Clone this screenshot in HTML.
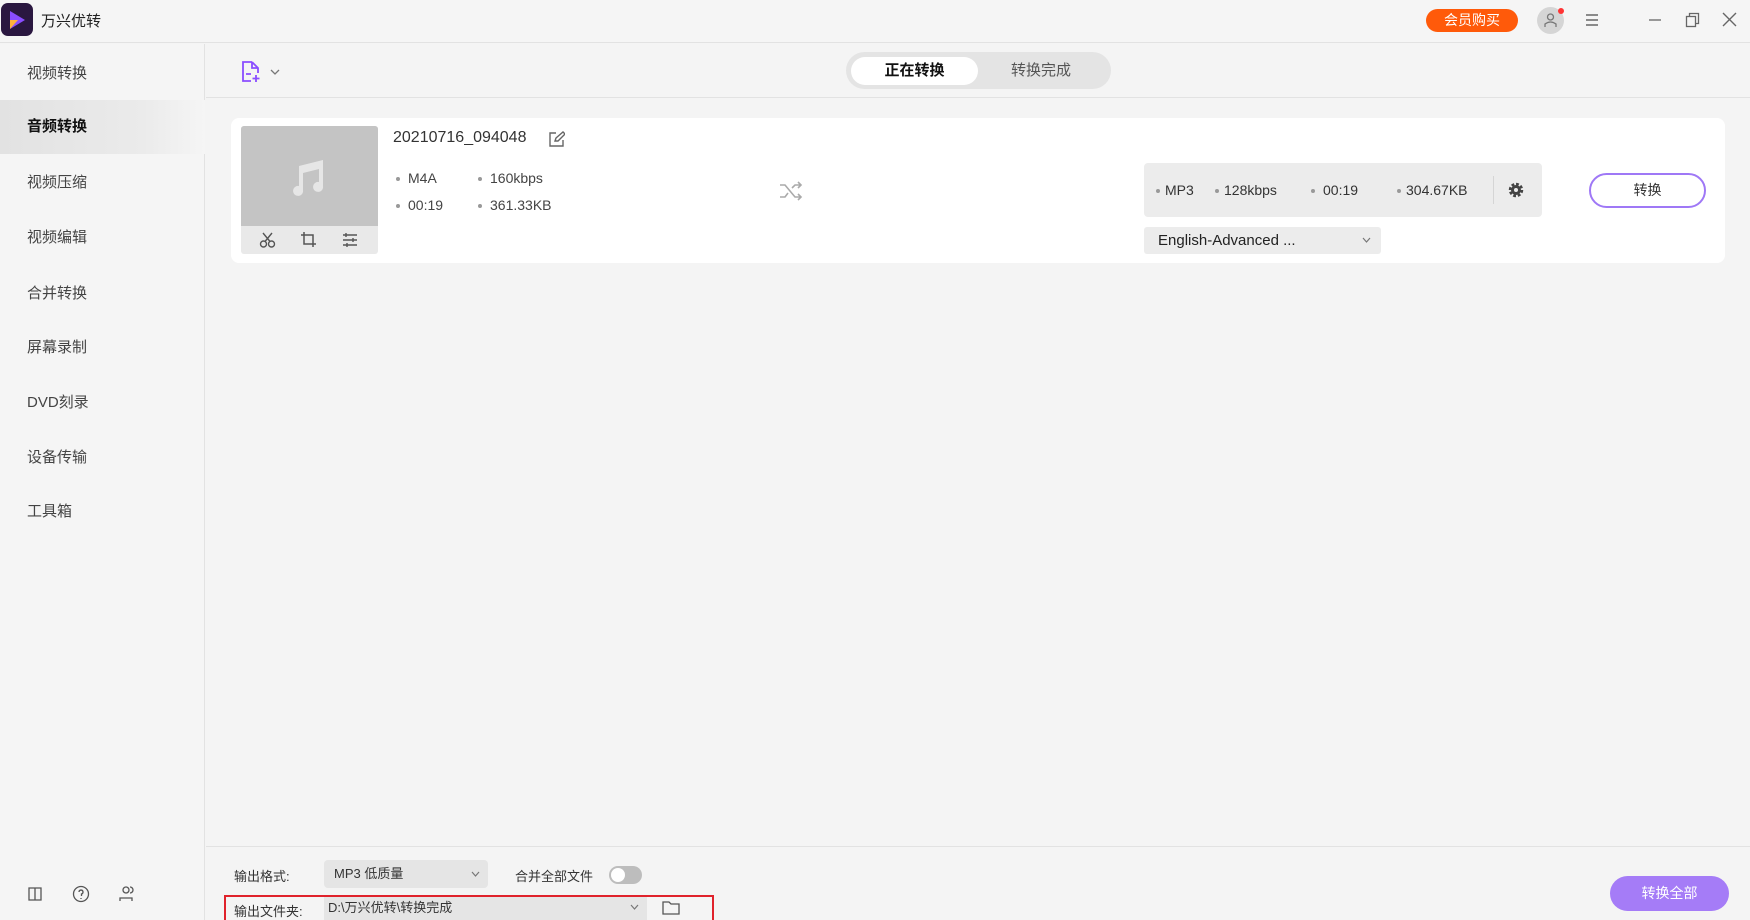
<!DOCTYPE html>
<html style="width:1750px;height:920px;overflow:hidden"><head><meta charset="utf-8"><style>
*{margin:0;padding:0;box-sizing:border-box}
body{width:1750px;height:920px;overflow:hidden;background:#f4f4f4;font-family:"Liberation Sans","Noto Sans CJK SC",sans-serif;color:#333;position:relative}
.a{position:absolute}
.nav{position:absolute;left:0;width:205px;height:54px;line-height:54px;padding-left:27px;font-size:15px;color:#444}
.dot{display:inline-block;width:4px;height:4px;border-radius:2px;background:#999;vertical-align:middle;margin-right:8px}
</style></head><body>
<div class="a" style="left:0;top:0;width:1750px;height:43px;background:#f5f5f5;border-bottom:1px solid #e2e2e2"></div>
<div class="a" style="left:1px;top:3px;width:32px;height:33px;border-radius:7px;background:#2a1740"></div>
<svg class="a" style="left:6px;top:9px" width="22" height="22" viewBox="0 0 22 22"><path d="M4 2 L19 11 L4 20 Z" fill="#8a4dff"/><path d="M4 11 L12 11 L4 20Z" fill="#ffb13b"/></svg>
<div class="a" style="left:41px;top:10px;font-size:15px;color:#222">万兴优转</div>
<div class="a" style="left:1426px;top:9px;width:92px;height:23px;border-radius:12px;background:#ff5a0a;color:#fff;font-size:14px;text-align:center;line-height:23px">会员购买</div>
<div class="a" style="left:1537px;top:7px;width:27px;height:27px;border-radius:14px;background:#d5d5d5"></div>
<svg class="a" style="left:1543px;top:12px" width="15" height="16" viewBox="0 0 15 16" fill="none" stroke="#777" stroke-width="1.3"><circle cx="7.5" cy="5" r="3"/><path d="M2 15 V12 Q7.5 8 13 12 V15"/></svg>
<div class="a" style="left:1558px;top:8px;width:6px;height:6px;border-radius:3px;background:#f33"></div>
<svg class="a" style="left:1585px;top:13px" width="14" height="14" stroke="#666" stroke-width="1.4"><path d="M1 2h12M1 7h12M1 12h12"/></svg>
<svg class="a" style="left:1648px;top:13px" width="14" height="14" stroke="#666" stroke-width="1.3"><path d="M1 7h12"/></svg>
<svg class="a" style="left:1685px;top:12px" width="15" height="16" stroke="#666" stroke-width="1.3" fill="none"><rect x="1.5" y="4.5" width="9" height="10"/><path d="M4.5 4.5V1.5h9v10h-3"/></svg>
<svg class="a" style="left:1722px;top:12px" width="15" height="15" stroke="#666" stroke-width="1.4"><path d="M1 1l13 13M14 1L1 14"/></svg>
<div class="a" style="left:0;top:44px;width:205px;height:876px;background:#f5f5f5;border-right:1px solid #e2e2e2"></div>
<div class="a" style="left:0;top:100px;width:205px;height:54px;background:linear-gradient(90deg,#e2e2e2,#ebebeb 70%,#f5f5f5)"></div>
<div class="nav" style="top:47px">视频转换</div>
<div class="nav" style="top:100px;font-weight:bold;color:#111">音频转换</div>
<div class="nav" style="top:156px">视频压缩</div>
<div class="nav" style="top:211px">视频编辑</div>
<div class="nav" style="top:267px">合并转换</div>
<div class="nav" style="top:321px">屏幕录制</div>
<div class="nav" style="top:376px">DVD刻录</div>
<div class="nav" style="top:431px">设备传输</div>
<div class="nav" style="top:485px">工具箱</div>
<svg class="a" style="left:27px;top:886px" width="18" height="16" fill="none" stroke="#555" stroke-width="1.3"><path d="M2 2h6v12H2zM8 2h6v12H8"/></svg>
<svg class="a" style="left:72px;top:885px" width="18" height="18" fill="none" stroke="#555" stroke-width="1.3"><circle cx="9" cy="9" r="7.5"/><path d="M7 7a2 2 0 1 1 2.5 2v2M9 13v1"/></svg>
<svg class="a" style="left:118px;top:885px" width="18" height="18" fill="none" stroke="#555" stroke-width="1.3"><circle cx="8" cy="5" r="3"/><path d="M2 16v-3h12v3M12 2a3 3 0 0 1 0 6"/></svg>
<div class="a" style="left:206px;top:97px;width:1544px;height:1px;background:#e2e2e2"></div>
<svg class="a" style="left:240px;top:60px" width="22" height="24" fill="none" stroke="#8a4dff" stroke-width="1.8"><path d="M12 2H3v19h8M12 2l6 6v5M12 2v6h6M6 14h5M16 15v7M12.5 18.5h7"/></svg>
<svg class="a" style="left:270px;top:68px" width="10" height="8" fill="none" stroke="#777" stroke-width="1.3"><path d="M1 2l4 4 4-4"/></svg>
<div class="a" style="left:846px;top:52px;width:265px;height:37px;border-radius:19px;background:#e4e4e4"></div>
<div class="a" style="left:851px;top:57px;width:127px;height:28px;border-radius:14px;background:#fff;font-size:15px;font-weight:bold;color:#111;text-align:center;line-height:28px">正在转换</div>
<div class="a" style="left:985px;top:57px;width:112px;height:28px;font-size:15px;color:#555;text-align:center;line-height:28px">转换完成</div>
<div class="a" style="left:231px;top:118px;width:1494px;height:145px;border-radius:8px;background:#fff"></div>
<div class="a" style="left:241px;top:126px;width:137px;height:128px;border-radius:3px;background:#e9e9e9;overflow:hidden"><div style="height:100px;background:#c4c4c4"></div></div>
<svg class="a" style="left:289px;top:158px" width="38" height="40" fill="#e6e6e6"><path d="M10 8L34 2V28A5 5 0 1 1 30 24V11L14 15V32A5 5 0 1 1 10 28Z"/></svg>
<svg class="a" style="left:259px;top:231px" width="18" height="18" fill="none" stroke="#555" stroke-width="1.4"><circle cx="4.5" cy="13" r="3"/><circle cx="12.5" cy="13" r="3"/><path d="M6 10.5L13 2M11 10.5L4 2"/></svg>
<svg class="a" style="left:300px;top:231px" width="18" height="18" fill="none" stroke="#555" stroke-width="1.5"><path d="M4 1v12h12M1 4h12v12"/></svg>
<svg class="a" style="left:342px;top:232px" width="16" height="16" fill="none" stroke="#555" stroke-width="1.4"><path d="M1 3h14M1 8h14M1 13h14M4 1v4M11 6v4M5 11v4"/></svg>
<div class="a" style="left:393px;top:129px;font-size:16px;color:#333">20210716_094048</div>
<svg class="a" style="left:548px;top:131px" width="17" height="17" fill="none" stroke="#666" stroke-width="1.4"><path d="M8 2H2v13h13V9M7 10l1-3 7-6 2 2-7 7z"/></svg>
<div class="a" style="left:396px;top:170px;font-size:14px;color:#444"><span class="dot"></span>M4A</div>
<div class="a" style="left:478px;top:170px;font-size:14px;color:#444"><span class="dot"></span>160kbps</div>
<div class="a" style="left:396px;top:197px;font-size:14px;color:#444"><span class="dot"></span>00:19</div>
<div class="a" style="left:478px;top:197px;font-size:14px;color:#444"><span class="dot"></span>361.33KB</div>
<svg class="a" style="left:779px;top:180px" width="24" height="22" fill="none" stroke="#aaa" stroke-width="1.6"><path d="M1 5h5l10 12h6M1 17h5l3-4M13 8l3-3h6M19 2l3 3-3 3M19 14l3 3-3 3"/></svg>
<div class="a" style="left:1144px;top:163px;width:398px;height:54px;border-radius:4px;background:#ececec"></div>
<div class="a" style="left:1156px;top:182px;font-size:14px;color:#333"><span class="dot" style="margin-right:5px"></span>MP3</div>
<div class="a" style="left:1215px;top:182px;font-size:14px;color:#333"><span class="dot" style="margin-right:5px"></span>128kbps</div>
<div class="a" style="left:1311px;top:182px;font-size:14px;color:#333"><span class="dot" style="margin-right:8px"></span>00:19</div>
<div class="a" style="left:1397px;top:182px;font-size:14px;color:#333"><span class="dot" style="margin-right:5px"></span>304.67KB</div>
<div class="a" style="left:1493px;top:176px;width:1px;height:28px;background:#d5d5d5"></div>
<svg class="a" style="left:1507px;top:181px" width="18" height="18" viewBox="0 0 18 18"><circle cx="9" cy="9" r="5.5" fill="none" stroke="#444" stroke-width="3.5" stroke-dasharray="2.6 1.7"/><circle cx="9" cy="9" r="5" fill="#444"/><circle cx="9" cy="9" r="2" fill="#ececec"/></svg>
<div class="a" style="left:1144px;top:227px;width:237px;height:27px;border-radius:3px;background:#ececec;font-size:15px;color:#222;line-height:27px;padding-left:14px">English-Advanced ...</div>
<svg class="a" style="left:1362px;top:237px" width="9" height="7" fill="none" stroke="#777" stroke-width="1.2"><path d="M1 1l3.5 4L8 1"/></svg>
<div class="a" style="left:1589px;top:173px;width:117px;height:35px;border-radius:18px;border:2px solid #9f78f6;background:#fff;font-size:14px;color:#333;text-align:center;line-height:31px">转换</div>
<div class="a" style="left:206px;top:846px;width:1544px;height:1px;background:#e2e2e2"></div>
<div class="a" style="left:234px;top:866px;font-size:13px;color:#333">输出格式:</div>
<div class="a" style="left:324px;top:860px;width:164px;height:28px;border-radius:4px;background:#e5e5e5;font-size:13px;color:#333;line-height:28px;padding-left:10px">MP3 低质量</div>
<svg class="a" style="left:471px;top:871px" width="9" height="7" fill="none" stroke="#777" stroke-width="1.2"><path d="M1 1l3.5 4L8 1"/></svg>
<div class="a" style="left:515px;top:866px;font-size:13px;color:#333">合并全部文件</div>
<div class="a" style="left:609px;top:866px;width:33px;height:18px;border-radius:9px;background:#bdbdbd"></div>
<div class="a" style="left:611px;top:868px;width:14px;height:14px;border-radius:7px;background:#fff"></div>
<div class="a" style="left:224px;top:895px;width:490px;height:25px;border:2px solid #e0222b;border-bottom:none"></div>
<div class="a" style="left:234px;top:901px;font-size:13px;color:#333">输出文件夹:</div>
<div class="a" style="left:324px;top:897px;width:323px;height:23px;background:#e5e5e5;font-size:13px;color:#333;line-height:22px;padding-left:4px">D:\万兴优转\转换完成</div>
<svg class="a" style="left:630px;top:904px" width="9" height="7" fill="none" stroke="#777" stroke-width="1.2"><path d="M1 1l3.5 4L8 1"/></svg>
<svg class="a" style="left:662px;top:900px" width="18" height="15" fill="none" stroke="#555" stroke-width="1.3"><path d="M1 2h6l2 2h8v10H1z"/></svg>
<div class="a" style="left:1610px;top:876px;width:119px;height:35px;border-radius:18px;background:#a57cf7;color:#fff;font-size:14px;text-align:center;line-height:35px">转换全部</div>
</body></html>
